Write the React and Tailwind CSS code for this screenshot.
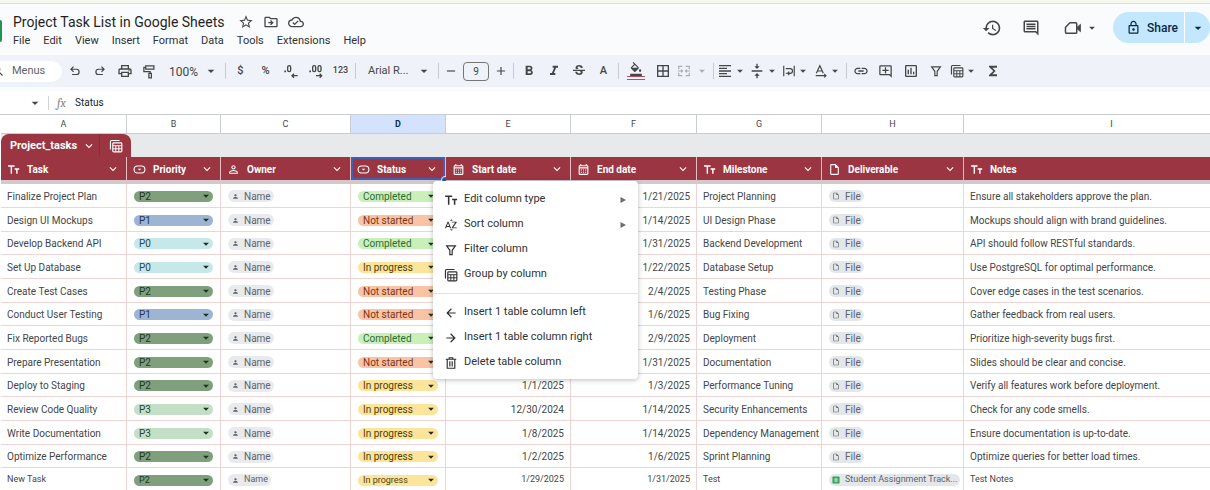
import { useState } from "react";
import clsx from "clsx";
import {
  MdAdd,
  MdArrowBack,
  MdArrowDropDown,
  MdArrowForward,
  MdBorderAll,
  MdFormatAlignLeft,
  MdFormatBold,
  MdFormatColorFill,
  MdFormatItalic,
  MdFunctions,
  MdHistory,
  MdInsertLink,
  MdKeyboardArrowDown,
  MdOutlineAddComment,
  MdOutlineCalendarMonth,
  MdOutlineCloudDone,
  MdOutlineComment,
  MdOutlineDriveFileMove,
  MdOutlineInsertChart,
  MdOutlineInsertDriveFile,
  MdOutlineLock,
  MdOutlinePrint,
  MdPerson,
  MdPersonOutline,
  MdRemove,
  MdSearch,
  MdSortByAlpha,
  MdStarBorder,
  MdStrikethroughS,
  MdVerticalAlignCenter,
} from "react-icons/md";

const Svg = ({ children, className = "size-4" }) => (
  <svg
    viewBox="0 0 24 24"
    fill="none"
    stroke="currentColor"
    strokeWidth="2"
    className={clsx("shrink-0", className)}
    aria-hidden="true"
  >
    {children}
  </svg>
);

const UndoIcon = ({ className }) => (
  <Svg className={className}>
    <path d="M7 18h7.5a4.5 4.5 0 0 0 0-9H5M9.5 4.5 5 9l4.5 4.5" />
  </Svg>
);

const RedoIcon = ({ className }) => (
  <Svg className={className}>
    <path d="M17 18H9.5a4.5 4.5 0 0 1 0-9H19M14.5 4.5 19 9l-4.5 4.5" />
  </Svg>
);

const PaintIcon = ({ className }) => (
  <Svg className={className}>
    <path d="M6 3h13v5H6zM6 5.5H3V12h10v3M11 15h4v7h-4z" />
  </Svg>
);

const DecimalIcon = ({ more, className }) => (
  <Svg className={className}>
    <path d="M2 12.5h2.5" strokeWidth="2.5" />
    <rect x="7" y="4" width="4.5" height="9" rx="2.2" />
    {more && <rect x="15" y="4" width="4.5" height="9" rx="2.2" />}
    {more ? (
      <path d="M12 19h8M17.5 16l3 3-3 3" />
    ) : (
      <path d="M22 19h-8M16.5 16l-3 3 3 3" />
    )}
  </Svg>
);

const MergeIcon = ({ className }) => (
  <Svg className={className}>
    <path d="M9 4H3v5M15 4h6v5M9 20H3v-5M15 20h6v-5M2 12h7M22 12h-7M7 9.5 9.5 12 7 14.5M17 9.5 14.5 12l2.5 2.5" />
  </Svg>
);

const WrapIcon = ({ className }) => (
  <Svg className={className}>
    <path d="M3 3v18M21 3v18M6.5 8H14a4 4 0 0 1 0 8h-4M12.5 13l-3 3 3 3M6.5 16H8" />
  </Svg>
);

const RotateIcon = ({ className }) => (
  <Svg className={className}>
    <path d="M4 16 10 3l6 13M6 12h8M3 20h17M17.5 17l3 3-3 3" />
  </Svg>
);

const FilterIcon = ({ className }) => (
  <Svg className={className}>
    <path d="M4.5 5h15L14 12.5V20h-4v-7.5z" />
  </Svg>
);

const TablesIcon = ({ className }) => (
  <Svg className={className}>
    <path d="M2.5 18V4.5a2 2 0 0 1 2-2H18" />
    <rect x="6.5" y="6.5" width="15.5" height="15.5" rx="1.5" />
    <path d="M7 11.5h15M7 16.8h15M11.7 12v10M16.9 12v10" strokeWidth="1.7" />
  </Svg>
);

const TextTypeIcon = ({ className }) => (
  <Svg className={className}>
    <path d="M2 5.5h12M8 5.5V20M14 11h8.5M18.2 11v9" strokeWidth="2.6" />
  </Svg>
);

const DropdownTypeIcon = ({ className }) => (
  <Svg className={className}>
    <rect x="2" y="5.5" width="20" height="13" rx="6.5" />
    <path d="M8.5 10.5h7L12 14z" fill="currentColor" stroke="none" />
  </Svg>
);

const TrashIcon = ({ className }) => (
  <Svg className={className}>
    <path d="M3 5.5h18M9 5V3h6v2M5.5 6v15h13V6M10 9v9M14 9v9" />
  </Svg>
);

const VideoIcon = ({ className }) => (
  <Svg className={className}>
    <path d="M8 5h7.5A1.5 1.5 0 0 1 17 6.5v11a1.5 1.5 0 0 1-1.5 1.5H3.5A1.5 1.5 0 0 1 2 17.5V11z" />
    <path d="M18 10.5 22 7v10l-4-3.5z" fill="currentColor" strokeWidth="1" />
  </Svg>
);

const menus = [
  "File",
  "Edit",
  "View",
  "Insert",
  "Format",
  "Data",
  "Tools",
  "Extensions",
  "Help",
];

const columns = [
  { letter: "A", name: "Task", icon: TextTypeIcon, width: "w-[126px]" },
  { letter: "B", name: "Priority", icon: DropdownTypeIcon, width: "w-[94px]" },
  { letter: "C", name: "Owner", icon: MdPersonOutline, width: "w-[130px]" },
  { letter: "D", name: "Status", icon: DropdownTypeIcon, width: "w-[95px]" },
  { letter: "E", name: "Start date", icon: MdOutlineCalendarMonth, width: "w-[125px]" },
  { letter: "F", name: "End date", icon: MdOutlineCalendarMonth, width: "w-[126px]" },
  { letter: "G", name: "Milestone", icon: TextTypeIcon, width: "w-[125px]" },
  { letter: "H", name: "Deliverable", icon: MdOutlineInsertDriveFile, width: "w-[142px]" },
  { letter: "I", name: "Notes", icon: TextTypeIcon, width: "w-auto" },
];

const priorityColors = {
  P0: "bg-[#c7e8e9] text-[#2b4a4c]",
  P1: "bg-[#9db4d3] text-[#1d3557]",
  P2: "bg-[#7f9f7d] text-[#1c3a1f]",
  P3: "bg-[#c3dfc6] text-[#26472b]",
};

const statusColors = {
  Completed: "bg-[#c9f0b9] text-[#2c6b35]",
  "Not started": "bg-[#fac3a4] text-[#7a3517]",
  "In progress": "bg-[#fde49b] text-[#524009]",
};

const tasks = [
  ["Finalize Project Plan", "P2", "Completed", "", "1/21/2025", "Project Planning", "Ensure all stakeholders approve the plan."],
  ["Design UI Mockups", "P1", "Not started", "", "1/14/2025", "UI Design Phase", "Mockups should align with brand guidelines."],
  ["Develop Backend API", "P0", "Completed", "", "1/31/2025", "Backend Development", "API should follow RESTful standards."],
  ["Set Up Database", "P0", "In progress", "", "1/22/2025", "Database Setup", "Use PostgreSQL for optimal performance."],
  ["Create Test Cases", "P2", "Not started", "", "2/4/2025", "Testing Phase", "Cover edge cases in the test scenarios."],
  ["Conduct User Testing", "P1", "Not started", "", "1/6/2025", "Bug Fixing", "Gather feedback from real users."],
  ["Fix Reported Bugs", "P2", "Completed", "", "2/9/2025", "Deployment", "Prioritize high-severity bugs first."],
  ["Prepare Presentation", "P2", "Not started", "", "1/31/2025", "Documentation", "Slides should be clear and concise."],
  ["Deploy to Staging", "P2", "In progress", "1/1/2025", "1/3/2025", "Performance Tuning", "Verify all features work before deployment."],
  ["Review Code Quality", "P3", "In progress", "12/30/2024", "1/14/2025", "Security Enhancements", "Check for any code smells."],
  ["Write Documentation", "P3", "In progress", "1/8/2025", "1/14/2025", "Dependency Management", "Ensure documentation is up-to-date."],
  ["Optimize Performance", "P2", "In progress", "1/2/2025", "1/6/2025", "Sprint Planning", "Optimize queries for better load times."],
  ["New Task", "P2", "In progress", "1/29/2025", "1/31/2025", "Test", "Test Notes", "Student Assignment Track..."],
];

const ToolButton = ({ label, className = "w-[25px]", children }) => (
  <button
    type="button"
    aria-label={label}
    className={clsx("flex h-6 shrink-0 items-center justify-center", className)}
  >
    {children}
  </button>
);

const Divider = () => <div className="mx-[2px] h-4 w-px shrink-0 bg-[#c7cad0]" />;

const Caret = ({ className = "size-4" }) => (
  <MdArrowDropDown className={clsx("pointer-events-none shrink-0", className)} />
);

const Header = () => (
  <header className="flex items-start justify-between border-t border-[#dcdfd3] bg-[#f9fbfd]">
    <div className="flex items-center pt-2">
      <div className="h-[22px] w-[2px] shrink-0 rounded-r-sm bg-[#1e9455]" />
      <div className="pl-[11px]">
        <div className="flex h-5 items-center">
          <h1 className="text-[14px] leading-5 text-[#1f1f1f]">Project Task List in Google Sheets</h1>
          <div className="ml-[9px] flex">
            <ToolButton label="Star">
              <MdStarBorder className="size-4" />
            </ToolButton>
            <ToolButton label="Move">
              <MdOutlineDriveFileMove className="size-4" />
            </ToolButton>
            <ToolButton label="Saved to Drive">
              <MdOutlineCloudDone className="size-4" />
            </ToolButton>
          </div>
        </div>
        <nav className="flex gap-[13px] text-[11px] leading-[18px] text-[#303134]">
          {menus.map((menu) => (
            <button key={menu} type="button">
              {menu}
            </button>
          ))}
        </nav>
      </div>
    </div>
    <div className="flex items-center pt-2">
      <button type="button" aria-label="Version history" className="mr-5">
        <MdHistory className="size-5" />
      </button>
      <button type="button" aria-label="Comments" className="mr-6">
        <MdOutlineComment className="size-[18px]" />
      </button>
      <button type="button" aria-label="Join a call" className="mr-[14px] flex items-center gap-[3px]">
        <VideoIcon className="size-[18px]" />
        <Caret className="size-[14px]" />
      </button>
      <div className="flex h-[31px] text-[12px] font-medium text-[#0b2a45]">
        <button type="button" className="flex items-center gap-[6px] rounded-l-full bg-[#c2e7ff] pr-[6px] pl-[13px]">
          <MdOutlineLock className="size-[15px]" />
          Share
        </button>
        <button
          type="button"
          aria-label="Share options"
          className="flex w-[26px] items-center justify-center rounded-r-full border-l border-white bg-[#c2e7ff]"
        >
          <Caret />
        </button>
      </div>
    </div>
  </header>
);

const Toolbar = () => (
  <div className="mt-[5px] flex h-8 shrink-0 items-center bg-[#eff2f8] text-[#444746]">
    <label className="flex h-[21px] w-[62px] shrink-0 items-center rounded-r-full bg-white text-[11px]">
      <MdSearch className="-ml-[9px] size-[14px] shrink-0" />
      <input
        aria-label="Search the menus"
        placeholder="Menus"
        className="ml-[7px] w-10 outline-none placeholder:text-[#5f6368]"
      />
    </label>
    <ToolButton label="Undo">
      <UndoIcon className="size-[14px]" />
    </ToolButton>
    <ToolButton label="Redo">
      <RedoIcon className="size-[14px]" />
    </ToolButton>
    <ToolButton label="Print">
      <MdOutlinePrint className="size-4" />
    </ToolButton>
    <ToolButton label="Paint format">
      <PaintIcon className="size-[15px]" />
    </ToolButton>
    <div className="relative flex w-[61px] shrink-0 items-center justify-end pr-1">
      <select aria-label="Zoom" className="absolute inset-0 appearance-none pl-[7px] text-[12px] outline-none">
        <option>100%</option>
      </select>
      <Caret />
    </div>
    <Divider />
    <ToolButton label="Format as currency">
      <span className="text-[11px] font-medium">$</span>
    </ToolButton>
    <ToolButton label="Format as percent">
      <span className="text-[11px] font-medium">%</span>
    </ToolButton>
    <ToolButton label="Decrease decimal places">
      <DecimalIcon />
    </ToolButton>
    <ToolButton label="Increase decimal places">
      <DecimalIcon more />
    </ToolButton>
    <ToolButton label="More formats">
      <span className="text-[9px] font-medium">123</span>
    </ToolButton>
    <Divider />
    <div className="relative flex w-[78px] shrink-0 items-center justify-end pr-1">
      <select aria-label="Font" className="absolute inset-0 appearance-none pl-[10px] text-[11px] outline-none">
        <option>Arial R...</option>
      </select>
      <Caret />
    </div>
    <Divider />
    <ToolButton label="Decrease font size" className="w-5">
      <MdRemove className="size-[14px]" />
    </ToolButton>
    <input
      aria-label="Font size"
      defaultValue="9"
      className="mx-[2px] h-[19px] w-[26px] shrink-0 rounded-sm border border-[#747775] text-center text-[10px] outline-none"
    />
    <ToolButton label="Increase font size" className="w-5">
      <MdAdd className="size-[14px]" />
    </ToolButton>
    <Divider />
    <ToolButton label="Bold">
      <MdFormatBold className="size-4" />
    </ToolButton>
    <ToolButton label="Italic">
      <MdFormatItalic className="size-4" />
    </ToolButton>
    <ToolButton label="Strikethrough">
      <MdStrikethroughS className="size-4" />
    </ToolButton>
    <ToolButton label="Text color">
      <span className="text-[11px] font-medium">A</span>
    </ToolButton>
    <Divider />
    <ToolButton label="Fill color" className="w-[30px] flex-col">
      <MdFormatColorFill className="size-[14px]" />
      <span className="h-1 w-[18px] border-y border-[#b3505c]" />
    </ToolButton>
    <ToolButton label="Borders" className="w-6">
      <MdBorderAll className="size-4" />
    </ToolButton>
    <ToolButton label="Merge cells" className="w-9 gap-1 text-[#a9acb0]">
      <MergeIcon className="size-[14px]" />
      <Caret className="size-[14px]" />
    </ToolButton>
    <Divider />
    <ToolButton label="Horizontal align" className="w-8">
      <MdFormatAlignLeft className="size-4" />
      <Caret className="size-[14px]" />
    </ToolButton>
    <ToolButton label="Vertical align" className="w-8">
      <MdVerticalAlignCenter className="size-4" />
      <Caret className="size-[14px]" />
    </ToolButton>
    <ToolButton label="Text wrapping" className="w-8">
      <WrapIcon className="size-[14px]" />
      <Caret className="size-[14px]" />
    </ToolButton>
    <ToolButton label="Text rotation" className="w-8">
      <RotateIcon className="size-[14px]" />
      <Caret className="size-[14px]" />
    </ToolButton>
    <Divider />
    <ToolButton label="Insert link" className="w-6">
      <MdInsertLink className="size-4" />
    </ToolButton>
    <ToolButton label="Insert comment">
      <MdOutlineAddComment className="size-[15px]" />
    </ToolButton>
    <ToolButton label="Insert chart">
      <MdOutlineInsertChart className="size-4" />
    </ToolButton>
    <ToolButton label="Create a filter">
      <FilterIcon className="size-[14px]" />
    </ToolButton>
    <ToolButton label="Table views" className="w-8">
      <TablesIcon className="size-[14px]" />
      <Caret className="size-[14px]" />
    </ToolButton>
    <ToolButton label="Functions">
      <MdFunctions className="size-4" />
    </ToolButton>
  </div>
);

const FormulaBar = () => (
  <div className="mt-1 flex h-[23px] shrink-0 items-center bg-white">
    <button type="button" aria-label="Name box" className="flex w-12 justify-end pr-[5px]">
      <Caret />
    </button>
    <div className="h-[14px] w-px bg-[#d0d3d8]" />
    <label htmlFor="formula" className="w-[26px] pl-2 font-serif text-[12px] text-[#80868b] italic">
      fx
    </label>
    <input
      id="formula"
      defaultValue="Status"
      className="min-w-0 flex-1 text-[10px] text-[#202124] outline-none"
    />
  </div>
);

const MenuItem = ({ icon: Icon, label, submenu }) => (
  <button type="button" role="menuitem" className="flex h-[25px] w-full items-center pr-3 pl-[11px]">
    <Icon className="size-[14px] shrink-0" />
    <span className="ml-[6px] flex-1 text-left">{label}</span>
    {submenu && (
      <svg viewBox="0 0 6 6" className="size-[6px] text-[#6b6e72]" aria-hidden="true">
        <path d="M0.5 0v6L6 3z" fill="currentColor" />
      </svg>
    )}
  </button>
);

const ColumnMenu = () => (
  <div
    role="menu"
    className="absolute top-6 left-[82px] z-10 w-[205px] rounded-sm bg-white pt-[6px] pb-1 text-[11px] font-normal text-[#303134] shadow-[0_1px_5px_rgba(60,64,67,0.35)]"
  >
    <MenuItem icon={TextTypeIcon} label="Edit column type" submenu />
    <MenuItem icon={MdSortByAlpha} label="Sort column" submenu />
    <MenuItem icon={FilterIcon} label="Filter column" />
    <MenuItem icon={TablesIcon} label="Group by column" />
    <div className="my-[6px] h-px bg-[#dfe1e5]" />
    <MenuItem icon={MdArrowBack} label="Insert 1 table column left" />
    <MenuItem icon={MdArrowForward} label="Insert 1 table column right" />
    <MenuItem icon={TrashIcon} label="Delete table column" />
  </div>
);

const ChipSelect = ({ label, options, colors, initial }) => {
  const [value, setValue] = useState(initial);

  return (
    <div className="relative flex items-center justify-end">
      <select
        aria-label={label}
        value={value}
        onChange={(e) => setValue(e.target.value)}
        className={clsx("h-[11px] w-full appearance-none rounded-full pl-[5px] leading-[11px] outline-none", colors[value])}
      >
        {options.map((option) => (
          <option key={option}>{option}</option>
        ))}
      </select>
      <Caret className="absolute right-0 size-[14px] text-[#1f2f20]" />
    </div>
  );
};

const TaskRow = ({ task }) => {
  const [name, priority, status, start, end, milestone, notes, file] = task;
  const cell = "border-r border-b border-[#f0d3d3] px-[6px] pt-px pb-0 whitespace-nowrap";
  const chipCell = "border-r border-b border-[#f0d3d3] px-[7px] pt-px pb-0 whitespace-nowrap";

  return (
    <tr className={clsx("h-6 [&:nth-child(3n)]:h-[23px]", file ? "text-[9px]" : "text-[10px]")}>
      <td className={cell}>{name}</td>
      <td className={chipCell}>
        <ChipSelect
          label={`Priority of ${name}`}
          options={Object.keys(priorityColors)}
          colors={priorityColors}
          initial={priority}
        />
      </td>
      <td className={chipCell}>
        <button
          type="button"
          className="flex h-[12px] items-center gap-[5px] rounded-full bg-[#e8eaed] pr-[3px] pl-1 text-[#5f6368]"
        >
          <MdPerson className="size-[7px]" />
          Name
        </button>
      </td>
      <td className={chipCell}>
        <ChipSelect
          label={`Status of ${name}`}
          options={Object.keys(statusColors)}
          colors={statusColors}
          initial={status}
        />
      </td>
      <td className={clsx(cell, "text-right")}>{start}</td>
      <td className={clsx(cell, "text-right")}>{end}</td>
      <td className={cell}>{milestone}</td>
      <td className={chipCell}>
        <a
          href="#file"
          className="flex h-[12px] w-fit items-center gap-[5px] rounded-full bg-[#e4e7ea] pr-[3px] pl-[3px] text-[#5f6368]"
        >
          {file ? (
            <svg viewBox="0 0 9 9" className="size-[8px]" aria-hidden="true">
              <rect x="0.500" y="0.500" width="8" height="8" rx="1" fill="#2fa35c" />
              <path d="M2 3.500h5M2 5.700h5M4.500 2v5" stroke="#fff" strokeWidth="0.700" />
            </svg>
          ) : (
            <MdOutlineInsertDriveFile className="size-[8px]" />
          )}
          {file || "File"}
        </a>
      </td>
      <td className={cell}>{notes}</td>
    </tr>
  );
};

const Sheet = () => (
  <main className="min-h-0 flex-1 overflow-hidden border-t border-[#c9ccd1] bg-white pl-px">
    <table className="w-full min-w-[1259px] table-fixed border-separate border-spacing-0 text-[#434649]">
      <colgroup>
        {columns.map((column) => (
          <col key={column.letter} className={column.width} />
        ))}
      </colgroup>
      <thead>
        <tr className="h-[19px] text-[9px]">
          {columns.map((column) => (
            <th
              key={column.letter}
              className={clsx(
                "border-r border-b border-[#c9ccd1] p-0 pt-px",
                column.name === "Status" ? "bg-[#d3e3fd] font-bold text-[#0b2a5b]" : "font-normal"
              )}
            >
              {column.letter}
            </th>
          ))}
        </tr>
        <tr className="h-[23px]">
          <td colSpan={columns.length} className="bg-[#e8e9eb] p-0">
            <div className="flex h-[23px] w-[130px] rounded-t-lg bg-[#9a3541] text-[11px] font-bold text-white">
              <button type="button" className="flex flex-1 items-center gap-[5px] pt-px pl-[9px]">
                Project_tasks
                <MdKeyboardArrowDown className="size-[14px]" />
              </button>
              <button
                type="button"
                aria-label="Table views"
                className="flex w-8 items-center justify-center border-l border-[#84303a] pt-px"
              >
                <TablesIcon className="size-[14px]" />
              </button>
            </div>
          </td>
        </tr>
        <tr className="h-[27px] text-[10px] text-white">
          {columns.map(({ name, icon: Icon }) => (
            <th
              key={name}
              className="relative border-r border-b-4 border-r-[#e3bfc3] border-b-[#d3c9cb] bg-[#9a3541] p-0 font-bold"
            >
              <div className="flex h-[23px] items-center pt-px pr-[6px] pl-[6px]">
                <Icon className="size-[13px] shrink-0" />
                <span className="ml-[7px] flex-1 text-left">{name}</span>
                <button type="button" aria-label={`${name} column menu`}>
                  <MdKeyboardArrowDown className="size-[14px]" />
                </button>
              </div>
              {name === "Status" && (
                <>
                  <div className="pointer-events-none absolute inset-0 border-2 border-[#3f5fb5]" />
                  <div className="absolute -right-1 -bottom-1 size-2 rounded-full border border-white bg-[#2b55b5]" />
                  <ColumnMenu />
                </>
              )}
            </th>
          ))}
        </tr>
      </thead>
      <tbody>
        {tasks.map((task) => (
          <TaskRow key={task[0]} task={task} />
        ))}
      </tbody>
    </table>
  </main>
);

const App = () => {
  return (
    <div className="flex h-screen flex-col overflow-hidden bg-[#f9fbfd] font-[Roboto,sans-serif] text-[#444746]">
      <div className="h-[3px] shrink-0 bg-[#f6f8ec]" />
      <Header />
      <Toolbar />
      <FormulaBar />
      <Sheet />
    </div>
  );
};

export default App;
